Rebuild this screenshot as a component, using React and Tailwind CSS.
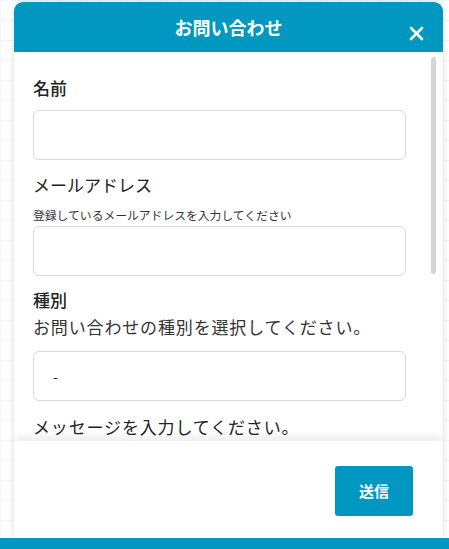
import React from "react";

const Field = ({ className = "" }) => (
  <div className={`h-[50px] w-full rounded-[6px] border border-[#dadada] bg-white ${className}`} />
);

const App = () => {
  return (
    <div
      className="relative flex h-[549px] w-[449px] flex-col overflow-hidden bg-white bg-[linear-gradient(#edf6fa_1px,transparent_1px),linear-gradient(90deg,#f1f8fb_1px,transparent_1px)] bg-[size:20px_20px]"
      style={{ fontFamily: '"Noto Sans CJK JP", "Noto Sans", sans-serif' }}
    >
      <div className="ml-[14px] mt-[2px] flex w-[429px] flex-1 flex-col overflow-hidden rounded-t-[9px] bg-white shadow-[0_0_6px_rgba(0,0,0,0.15)]">
        {/* Header */}
        <div className="relative flex h-[50px] shrink-0 items-center justify-center bg-[#0098c0]">
          <h2 className="text-[18px] font-bold leading-none text-white">お問い合わせ</h2>
          <button className="absolute right-[19px] top-[24px] text-white">
            <svg width="15" height="15" viewBox="0 0 15 15">
              <path d="M2 2 L13 13 M13 2 L2 13" stroke="white" strokeWidth="2.6" strokeLinecap="round" />
            </svg>
          </button>
        </div>

        {/* Body */}
        <div className="relative h-[389px] shrink-0 overflow-hidden">
          <div className="pl-[19px] pr-[37px] pt-[24px] text-[#222]">
            <p className="text-[17px] font-medium leading-[24px]">名前</p>
            <Field className="mt-[10px]" />

            <p className="mt-[13px] text-[17px] leading-[24px]">メールアドレス</p>
            <p className="mt-[10px] text-[11.8px] leading-[16px] text-[#333]">登録しているメールアドレスを入力してください</p>
            <Field className="mt-[3px]" />

            <p className="mt-[12px] text-[17px] font-medium leading-[24px]">種別</p>
            <p className="mt-[3px] text-[17px] leading-[24px] tracking-[0.05em] text-[#333]">お問い合わせの種別を選択してください。</p>
            <div className="mt-[12px] flex h-[50px] items-center rounded-[6px] border border-[#dadada] px-[19px] text-[14px] text-[#222]">
              -
            </div>

            <p className="mt-[14px] text-[17px] leading-[24px] tracking-[0.05em]">メッセージを入力してください。</p>
            <div className="mt-[10px] h-[120px] rounded-[6px] border border-[#dadada]" />
          </div>
          <div className="absolute right-[7px] top-[5px] h-[217px] w-[5px] rounded-full bg-[#d3d6d9]" />
        </div>

        {/* Footer */}
        <div className="relative z-10 flex flex-1 items-start justify-end bg-white pr-[30px] pt-[25px] shadow-[0_-4px_8px_rgba(0,0,0,0.08)]">
          <button className="flex h-[50px] w-[78px] items-center justify-center rounded-[3px] bg-[#0098c0] text-[15px] font-bold text-white">
            送信
          </button>
        </div>
      </div>
      <div className="h-[11px] w-full shrink-0 bg-[#0098c0]" />
    </div>
  );
};

export default App;
